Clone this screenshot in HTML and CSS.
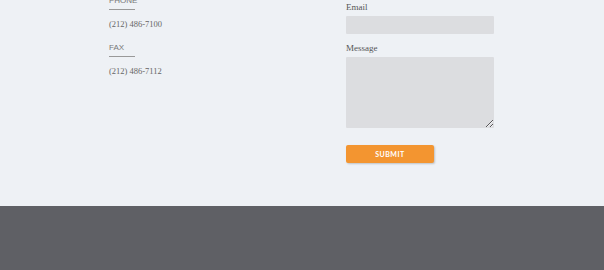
FILE: index.html
```html
<!DOCTYPE html>
<html lang="en">
<head>
  <meta charset="UTF-8" />
  <meta name="viewport" content="width=device-width, initial-scale=1.0"/>
  <title>Contact</title>
  <link rel="stylesheet" href="styles.css">
</head>
<body>

  <!-- Contact Section -->
  <section class="contact">
    <div class="contact-grid">
      <div class="details">
        <div class="label">Phone</div>
        <div class="value">(212) 486-7100</div>
        <div class="label fax">Fax</div>
        <div class="value">(212) 486-7112</div>
      </div>

      <form class="form" onsubmit="return false;">
        <label for="email">Email</label>
        <input type="text" id="email" />
        <label for="message" class="msg-label">Message</label>
        <textarea id="message"></textarea>
        <button type="submit">Submit</button>
      </form>
    </div>
  </section>

  <footer class="footer"></footer>

</body>
</html>
```

FILE: styles.css
```css
* {
  box-sizing: border-box;
  margin: 0;
  padding: 0;
}

html, body {
  font-family: 'Liberation Serif', serif;
  background: #eef1f5;
  color: #555;
}

/* Contact Section */
.contact {
  display: flow-root;
  height: 206px;
}

.contact-grid {
  display: grid;
  grid-template-columns: 237px 148px;
  padding-left: 109px;
  margin-top: -5px;
}

.label {
  font-family: 'Liberation Sans', sans-serif;
  font-size: 8px;
  line-height: 11px;
  text-transform: uppercase;
  color: #777;
  width: 26px;
  padding-bottom: 3px;
  border-bottom: 1px solid #999;
}

.label.fax {
  margin-top: 12px;
}

.value {
  font-size: 8.5px;
  line-height: 12px;
  margin-top: 8px;
  color: #666;
}

.form {
  display: flex;
  flex-direction: column;
  align-items: flex-start;
  padding-top: 6px;
}

.form label {
  font-size: 9px;
  line-height: 12px;
  color: #555;
}

.form .msg-label {
  margin-top: 8px;
}

.form input,
.form textarea {
  width: 148px;
  margin-top: 3px;
  border: none;
  outline: none;
  background: #dcdde0;
  border-radius: 1px;
}

.form input {
  height: 18px;
}

.form textarea {
  height: 71px;
  resize: vertical;
}

.form button {
  margin-top: 17px;
  width: 88px;
  height: 18px;
  border: none;
  border-radius: 2px;
  background: #f39530;
  color: #fff;
  font-family: 'Lato', sans-serif;
  font-weight: 700;
  font-size: 7px;
  letter-spacing: 0.5px;
  text-transform: uppercase;
  box-shadow: 1px 1px 2px rgba(0,0,0,0.2);
  cursor: pointer;
}

footer.footer {
  height: 64px;
  background: #5f6065;
}
```
